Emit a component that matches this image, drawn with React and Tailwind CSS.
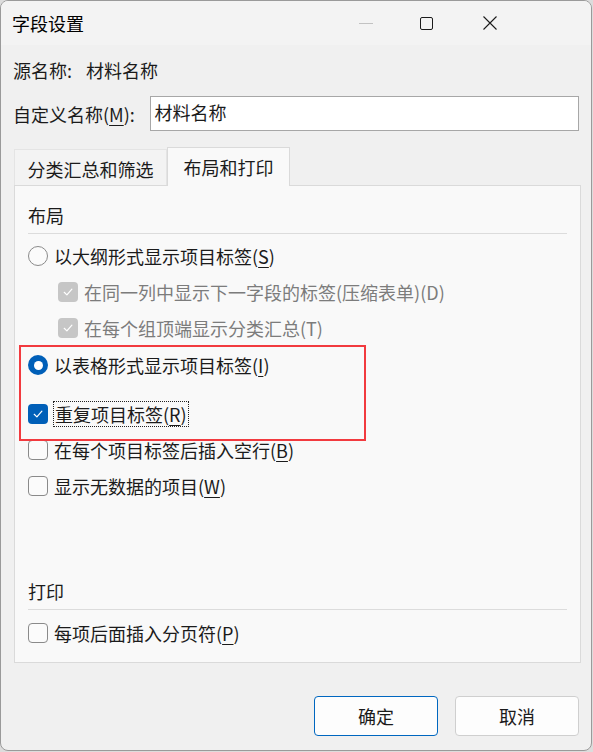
import React from "react"

const FONT = { fontFamily: '"Noto Sans CJK SC", "Microsoft YaHei", sans-serif' }

function Radio({ checked }) {
  if (checked) {
    return (
      <span className="flex h-[20px] w-[20px] shrink-0 items-center justify-center rounded-full bg-[#005fb8]">
        <span className="h-[9px] w-[9px] rounded-full bg-white" />
      </span>
    )
  }
  return <span className="h-[20px] w-[20px] shrink-0 rounded-full border border-[#8a8a8a] bg-[#fbfbfb]" />
}

function Check({ state }) {
  if (state === "on" || state === "disabled") {
    const bg = state === "on" ? "bg-[#005fb8]" : "bg-[#c6c6c6]"
    return (
      <span className={`flex h-[20px] w-[20px] shrink-0 items-center justify-center rounded-[4px] ${bg}`}>
        <svg width="12" height="12" viewBox="0 0 12 12" fill="none">
          <path d="M2.2 6.3 L4.9 8.9 L9.9 3.2" stroke="white" strokeWidth="1.2" strokeLinecap="round" strokeLinejoin="round" />
        </svg>
      </span>
    )
  }
  return <span className="h-[20px] w-[20px] shrink-0 rounded-[4px] border border-[#8a8a8a] bg-[#fbfbfb]" />
}

function Key({ text, k, tail = ")" }) {
  return (
    <>
      {text}(<span className="underline underline-offset-[3px] decoration-1">{k}</span>{tail}
    </>
  )
}

function Row({ indent, control, children, disabled, className = "" }) {
  return (
    <div className={`flex h-[36px] items-center gap-[6px] ${indent ? "pl-[30px]" : ""} ${className}`}>
      {control}
      <span className={disabled ? "text-[#7c7c7c]" : "text-[#1b1b1b]"}>{children}</span>
    </div>
  )
}

export default function App() {
  return (
    <div className="h-[752px] w-[593px] bg-[#dcdcdc] text-[18px] leading-[24px] text-[#1b1b1b]" style={FONT}>
      <div className="flex h-[751px] w-[592px] flex-col overflow-hidden rounded-[8px] border border-[#9a9a9a] bg-[#f0f0f0]">
        {/* title bar */}
        <div className="flex h-[44px] shrink-0 items-center bg-[#f3f3f3] pl-[11px]">
          <span className="flex-1 text-[#000]">字段设置</span>
          <div className="flex items-center">
            <span className="mr-[47px] h-px w-[14px] bg-[#c2c2c2]" />
            <span className="mr-[50px] h-[13px] w-[13px] rounded-[2px] border border-[#1b1b1b]" />
            <svg className="mr-[94px]" width="14" height="14" viewBox="0 0 14 14">
              <path d="M0.5 0.5 L13.5 13.5 M13.5 0.5 L0.5 13.5" stroke="#1b1b1b" strokeWidth="1.1" />
            </svg>
          </div>
        </div>

        <div className="flex flex-1 flex-col px-[12px]">
          {/* source name */}
          <div className="mt-[10px] flex h-[30px] items-center">
            <span className="w-[73px]">源名称:</span>
            <span>材料名称</span>
          </div>

          {/* custom name */}
          <div className="mt-[11px] flex items-center">
            <span className="w-[137px]">
              自定义名称(<span className="underline underline-offset-[3px] decoration-1">M</span>):
            </span>
            <div className="h-[35px] w-[431px] border border-[#a7a7a7] bg-white pl-[4px] pt-[3px]">材料名称</div>
          </div>

          {/* tabs */}
          <div className="mt-[16px] flex items-end pl-[1px]">
            <div className="flex h-[36px] w-[153px] items-center justify-center border border-b-0 border-[#e4e4e4] bg-[#f3f3f3] pt-[2px]">
              分类汇总和筛选
            </div>
            <div className="relative z-10 -mb-px flex h-[39px] w-[123px] items-center justify-center border border-b-0 border-[#dadada] bg-[#f9f9f9]">
              布局和打印
            </div>
          </div>

          {/* panel */}
          <div className="relative ml-[1px] h-[478px] w-[567px] border border-[#dadada] bg-[#f9f9f9] px-[13px]">
            <div className="border-b border-[#dcdcdc] pb-[6px] pt-[17px]">布局</div>
            <Row className="mt-[4px]" control={<Radio />}>
              <Key text="以大纲形式显示项目标签" k="S" />
            </Row>
            <Row indent disabled control={<Check state="disabled" />}>
              在同一列中显示下一字段的标签(压缩表单)(D)
            </Row>
            <Row indent disabled control={<Check state="disabled" />}>
              在每个组顶端显示分类汇总(T)
            </Row>
            <Row className="mt-px" control={<Radio checked />}>
              <Key text="以表格形式显示项目标签" k="I" />
            </Row>
            <div className="mt-[13px] flex h-[36px] items-center gap-[5px]">
              <Check state="on" />
              <span className="border border-dotted border-[#222] px-px leading-[24px]">
                <Key text="重复项目标签" k="R" />
              </span>
            </div>
            <Row control={<Check />}>
              <Key text="在每个项目标签后插入空行" k="B" />
            </Row>
            <Row control={<Check />}>
              <Key text="显示无数据的项目" k="W" />
            </Row>
            <div className="border-b border-[#dcdcdc] pb-[6px] pt-[75px]">打印</div>
            <Row className="mt-[5px]" control={<Check />}>
              <Key text="每项后面插入分页符" k="P" />
            </Row>

            {/* red annotation box */}
            <div className="pointer-events-none absolute left-[4px] top-[159px] h-[96px] w-[347px] border-2 border-[#f23a3f]" />
          </div>

          {/* buttons */}
          <div className="mt-[33px] flex justify-end gap-[17px]">
            <button className="h-[40px] w-[124px] rounded-[4px] border border-[#0067c0] bg-[#fdfdfd] text-[18px] text-[#1b1b1b]" style={FONT}>
              确定
            </button>
            <button className="h-[40px] w-[124px] rounded-[4px] border border-[#cfcfcf] bg-[#fdfdfd] text-[18px] text-[#1b1b1b]" style={FONT}>
              取消
            </button>
          </div>
        </div>
      </div>
    </div>
  )
}
